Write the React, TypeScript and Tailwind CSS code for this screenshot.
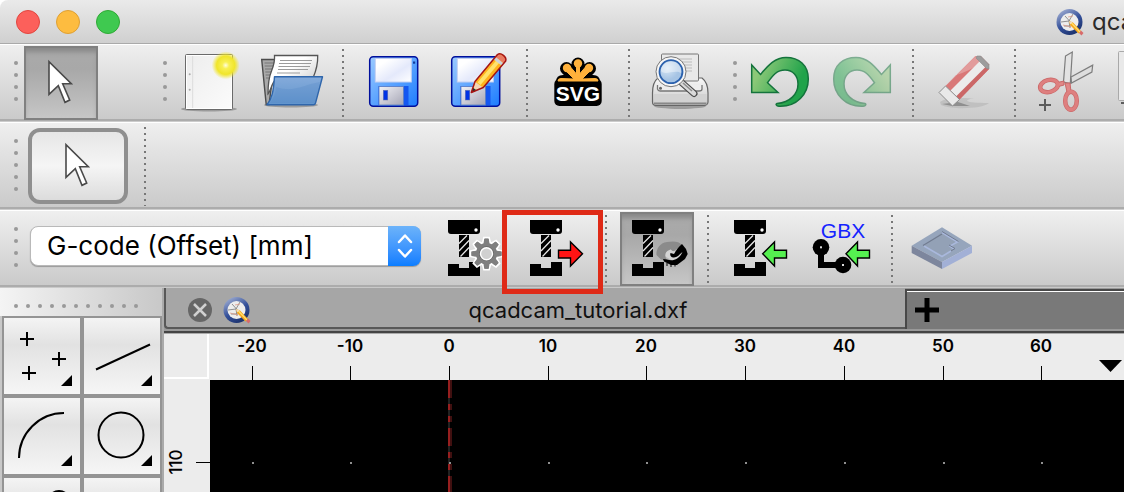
import type { ReactNode } from 'react'
import clsx from 'clsx'

const BAR = 'flex shrink-0 overflow-x-clip border-t border-t-white bg-linear-to-b from-[#efefef] to-[#c9c9c9]'

/* ---------- icons ---------- */

function Icon({ children, className }: { children: ReactNode; className?: string }) {
  return (
    <svg viewBox="0 0 64 64" className={clsx('block size-16 shrink-0 overflow-visible', className)} aria-hidden="true">
      {children}
    </svg>
  )
}

function PointerIcon() {
  return (
    <Icon>
      <path d="M20 10.7V43.3L29.3 34.7 36 51.3 40.7 49 33.7 32.7H42.3Z" fill="#fff" stroke="#4a4a4a" strokeWidth="1.6" />
    </Icon>
  )
}

function NewIcon() {
  return (
    <Icon>
      <defs>
        <radialGradient id="sun">
          <stop offset="0" stopColor="#fffde0" />
          <stop offset=".25" stopColor="#f8f052" />
          <stop offset=".65" stopColor="#f0e52c" />
          <stop offset="1" stopColor="#f0e52c" stopOpacity="0" />
        </radialGradient>
        <linearGradient id="paper" x1="0" y1="0" x2="1" y2="1">
          <stop offset="0" stopColor="#ededed" />
          <stop offset="1" stopColor="#fbfbfb" />
        </linearGradient>
      </defs>
      <ellipse cx="31" cy="58" rx="28" ry="2.5" fill="#000" opacity=".25" />
      <rect x="7.5" y="3.5" width="47" height="55" rx="1" fill="url(#paper)" stroke="#6a6a6a" />
      <rect x="8.5" y="4.5" width="45" height="53" fill="none" stroke="#fff" />
      <path d="M14.7 5V57" stroke="#dcdcdc" />
      <circle cx="11.7" cy="23.3" r="1" fill="#aaa" />
      <circle cx="11.7" cy="38.7" r="1" fill="#aaa" />
      <circle cx="47.7" cy="14.3" r="14" fill="url(#sun)" />
    </Icon>
  )
}

function OpenIcon() {
  return (
    <Icon>
      <defs>
        <linearGradient id="folder" x1="0" y1="0" x2="0" y2="1">
          <stop offset="0" stopColor="#85abdb" />
          <stop offset="1" stopColor="#6094cc" />
        </linearGradient>
        <linearGradient id="sheet" x1="0" y1="0" x2="1" y2="1">
          <stop offset=".4" stopColor="#fff" />
          <stop offset="1" stopColor="#bdbdbd" />
        </linearGradient>
      </defs>
      <ellipse cx="31" cy="54" rx="27" ry="2.5" fill="#000" opacity=".25" />
      <path d="M1.7 8.5H15L9 53.5H6.2Z" fill="#a9a9a9" stroke="#4c4c4c" strokeWidth="1.4" />
      <path d="M4.5 12H14M4.7 15H14M5 18H13M5.3 21H12M5.6 24H11M6 27H11" stroke="#777" strokeWidth="1.2" />
      <path d="M14.5 4.5H57.7C58 13 56 20 53 27H17C11 32 11 40 8 43 8 34 9 26 11.5 20 13.5 15 15 11 14.5 4.5Z" fill="url(#sheet)" stroke="#555" strokeWidth="1.3" />
      <path d="M20 9.5H52M19 12.5H51M18.5 15.5H50M18 18.5H48M17 22H40" stroke="#9b9b9b" strokeWidth="1.2" />
      <path d="M14.5 25.7H62.5L55.5 52C55 53.5 54.5 53.7 53.5 53.7H7C12 48 13.5 40 14.5 25.7Z" fill="url(#folder)" stroke="#2f66ab" strokeWidth="1.4" strokeLinejoin="round" />
      <path d="M16 36C34 42 42 34 60 31L54.5 52H10C14 47 15.5 42 16 36Z" fill="#4e85c4" opacity=".25" />
    </Icon>
  )
}

function Floppy() {
  return (
    <>
      <defs>
        <linearGradient id="disk" x1="0" y1="0" x2="1" y2="1">
          <stop offset="0" stopColor="#9ccbff" />
          <stop offset="1" stopColor="#1c7cff" />
        </linearGradient>
        <linearGradient id="label" x1="0" y1="0" x2="1" y2="1">
          <stop offset=".2" stopColor="#fff" />
          <stop offset=".6" stopColor="#e4e9fb" />
          <stop offset="1" stopColor="#fff" />
        </linearGradient>
        <linearGradient id="shutter" x1="0" y1="0" x2="1" y2="1">
          <stop offset="0" stopColor="#f2f2f6" />
          <stop offset="1" stopColor="#a5a5b5" />
        </linearGradient>
      </defs>
      <rect x="7.7" y="5.7" width="48" height="49.6" rx="3.5" fill="url(#disk)" stroke="#000f9c" strokeWidth="1.5" />
      <rect x="13.3" y="7.5" width="36" height="23.5" fill="url(#label)" stroke="#c3cff0" />
      <rect x="51" y="10.5" width="2.2" height="2.2" fill="#123c9c" />
      <rect x="16.5" y="35" width="30" height="19" fill="#1457f0" />
      <rect x="17" y="35.5" width="24.5" height="18.5" fill="url(#shutter)" stroke="#5d7fc4" strokeWidth=".8" />
      <rect x="21.3" y="39.3" width="4.5" height="9.7" fill="#0033e6" stroke="#6672a8" strokeWidth=".5" />
    </>
  )
}

function SaveAsIcon() {
  return (
    <Icon>
      <Floppy />
      <path d="M27.3 41.5 31 30.5 53.5 3.5C57 1 63 6 61.7 10L39.3 36.5Z" fill="#ffb31f" />
      <path d="M33.5 31.5 53 8.5 56 11 36.5 34Z" fill="#ffe36b" />
      <path d="M28 40.8 31.5 31 39 36.5Z" fill="#f2d5b4" />
      <path d="M27.3 41.5 29 36.8 32.5 39.3Z" fill="#153c2a" />
      <path d="M51.5 6 60 12.5 61.5 10C62.5 6.5 57.5 2.3 53.5 3.7Z" fill="#e97b62" />
      <path d="M50.5 7 59 13.8" stroke="#cdd3d9" strokeWidth="3" />
      <path d="M27.3 41.5 31 30.5 53.5 3.5C57 1 63 6 61.7 10L39.3 36.5Z" fill="none" stroke="#a51414" strokeWidth="1.5" strokeLinejoin="round" />
    </Icon>
  )
}

function SvgLogo() {
  return (
    <Icon>
      <path d="M32 29V13M32 29 20.5 17.5M32 29 43.5 17.5" stroke="#000" strokeWidth="13" strokeLinecap="round" />
      <path d="M10 31Q10 24 17 24H47Q54 24 54 31Z" />
      <rect x="8.3" y="28" width="47.4" height="27" rx="5" />
      <path d="M12 30Q12 27.5 15 27.5L28 28 20 20 24 15.5 30.5 23V12H33.5V23L40 15.5 44 20 36 28 49 27.5Q52 27.5 52 30Z" fill="#ffb13b" stroke="#ffb13b" />
      <circle cx="32" cy="12.5" r="4.2" fill="#ffb13b" />
      <circle cx="21" cy="17" r="4.2" fill="#ffb13b" />
      <circle cx="43" cy="17" r="4.2" fill="#ffb13b" />
      <text x="32" y="50" textAnchor="middle" fill="#fff" fontFamily="Liberation Sans, sans-serif" fontWeight="700" fontSize="21">SVG</text>
    </Icon>
  )
}

function PreviewIcon() {
  return (
    <Icon>
      <defs>
        <linearGradient id="printer" x1="0" y1="0" x2="0" y2="1">
          <stop offset="0" stopColor="#f8f8f8" />
          <stop offset="1" stopColor="#c8c8c8" />
        </linearGradient>
        <radialGradient id="lens" cx=".35" cy=".35">
          <stop offset="0" stopColor="#d8e7f5" />
          <stop offset="1" stopColor="#a6c4e4" />
        </radialGradient>
      </defs>
      <ellipse cx="32" cy="55" rx="26" ry="3" fill="#000" opacity=".25" />
      <path d="M10 27H54C58 30 60 36 60 42V51C60 53 58 54.5 56 54.5H8C6 54.5 4.5 53 4.5 51V42C4.5 36 6 30 10 27Z" fill="url(#printer)" stroke="#666" strokeWidth="1.2" />
      <path d="M6 43H58.5V50Q58 51 56 51H8Q6 51 6 49Z" fill="#d2d2d2" />
      <path d="M6 52.5H58.5" stroke="#888" strokeWidth="2" />
      <path d="M9.5 34V38Q10 40 12 40H51Q54 40 54 38V34" fill="#eee" stroke="#777" strokeWidth="1.3" />
      <rect x="13.5" y="3" width="37" height="27" rx="1" fill="#e9e9e9" stroke="#777" />
      <path d="M18 8H44M18 11H44M18 14H44M18 17H44M18 20H44" stroke="#bbb" strokeWidth="1.2" />
      <circle cx="12.5" cy="37.3" r="1.5" fill="#666" />
      <path d="M33 31 46 42.5" stroke="#4b4b4b" strokeWidth="7" strokeLinecap="round" />
      <path d="M33 31 46 42.5" stroke="#dadada" strokeWidth="4.5" strokeLinecap="round" />
      <path d="M35 32 44 40" stroke="#8c8c8c" strokeWidth="1.5" />
      <circle cx="23" cy="20.7" r="15" fill="#f6f6f6" stroke="#777" />
      <circle cx="23" cy="20.7" r="11.5" fill="url(#lens)" stroke="#2b61ad" strokeWidth="1.8" />
      <path d="M13 20C17 25 27 18 33 22 34 13 28 10.5 23 10.5 17 10.5 13 15 13 20Z" fill="#fff" opacity=".4" />
    </Icon>
  )
}

function UndoIcon({ flip = false }: { flip?: boolean }) {
  return (
    <Icon className={flip ? '-scale-x-100 opacity-50' : undefined}>
      <defs>
        <linearGradient id="undo" x1="0" y1="0" x2="1" y2=".4">
          <stop offset=".2" stopColor="#8cc878" />
          <stop offset=".9" stopColor="#20a34a" />
        </linearGradient>
      </defs>
      <path
        d="M3.7 14V41.5H30L19.5 31.7C25 24 29 19 37 19 45 19 50 25 50 33 50 43 42 51.5 29 52.5 27.5 53 28 55 31 55.3 49 56 60.3 43 60.3 28 60.3 14 51 6.5 38 6.5 26 6.5 19 16 12.5 23.5Z"
        fill="url(#undo)"
        stroke="#14733c"
        strokeWidth="1.5"
      />
    </Icon>
  )
}

function EraserIcon() {
  return (
    <Icon>
      <path d="M8 51C18 45 34 48 42 47 32 49 30 52 57 52 50 58 20 59 9 54Z" fill="#bcbcbc" opacity=".8" />
      <path d="M10 53 20 55H38L26 51Z" fill="#8f8f8f" />
      <path d="M13.5 35 43.5 5H48.7L57 13.5V18L27.5 48.5Z" fill="#d97878" />
      <path d="M22 43 54 11 57 13.5V18L27.5 48.5Z" fill="#cb6767" />
      <path d="M13.5 35 43.5 5H47L52 10Q38 20 24 24Z" fill="#e29b9b" />
      <path d="M18.5 39.5 48 10 53.5 16 24 45.5Z" fill="#ececec" />
      <path d="M45 5H48.7L57 13.5V18L54.5 17.5 44 7Z" fill="#9c9c9c" stroke="#8b8b8b" strokeWidth=".6" />
      <path d="M7 41.5 13.5 35 27.5 48.5 20.5 55Z" fill="#e9e9e9" stroke="#8d8d8d" />
    </Icon>
  )
}

function CutIcon() {
  return (
    <Icon>
      <path d="M31.5 5 38.3 1 36.3 32.5 29.5 31Z" fill="#e3e3e3" stroke="#7d7d7d" strokeWidth="1.2" />
      <path d="M37 26 58.7 14.2 57.9 21 37.5 32Z" fill="#dedede" stroke="#7d7d7d" strokeWidth="1.2" />
      <ellipse cx="15" cy="35" rx="9" ry="6" transform="rotate(-14 15 35)" fill="none" stroke="#c96767" strokeWidth="4.5" />
      <ellipse cx="37" cy="49.7" rx="5.8" ry="9" fill="none" stroke="#c96767" strokeWidth="4.5" />
      <path d="M23.5 31.5 30 30V34L24.5 35.5ZM31 32H36L37 41H33Z" fill="#e08787" stroke="#c96767" />
      <ellipse cx="15" cy="35" rx="9" ry="6" transform="rotate(-14 15 35)" fill="none" stroke="#de7f7f" strokeWidth="3.2" />
      <ellipse cx="37" cy="49.7" rx="5.8" ry="9" fill="none" stroke="#de7f7f" strokeWidth="3.2" />
      <path d="M5 54H17M11 48V60" stroke="#5c5c5c" strokeWidth="2" />
    </Icon>
  )
}

function CopyIcon() {
  return (
    <Icon>
      <rect x="2.5" y=".5" width="38" height="49" rx="1" fill="#e9e9e9" stroke="#a9a9a9" />
      <path d="M5 52H17M11 46V58" stroke="#5c5c5c" strokeWidth="2" />
    </Icon>
  )
}

// Milling head, drill and vice shared by all CAM tools
function Mill() {
  return (
    <>
      <path d="M7 3H39V14Q39 17 36 17H10Q7 17 7 14Z" />
      <circle cx="35" cy="13" r="1.7" fill="#fff" />
      <rect x="18" y="18" width="10" height="22" />
      <path d="M18 26.5 26 18.5M18 34 28 23.5M19.5 39.5 28 30.5" stroke="#e6e6e6" strokeWidth="1.3" />
      <path d="M7 47H18V51H28V45H39V59H7Z" />
    </>
  )
}

const TEETH = [0, 45, 90, 135, 180, 225, 270, 315]

function MillSetupIcon() {
  return (
    <Icon>
      <Mill />
      <g transform="translate(45.5 36.7)">
        {TEETH.map(a => (
          <path key={a} d="M-4-10-2.5-16H2.5L4-10Z" transform={`rotate(${a})`} fill="#7f7f7f" stroke="#fff" strokeWidth="1.8" />
        ))}
        <circle r="11.5" fill="#7f7f7f" stroke="#fff" strokeWidth="1.8" />
        {TEETH.map(a => (
          <path key={a} d="M-3.2-9-2.2-15H2.2L3.2-9Z" transform={`rotate(${a})`} fill="#7f7f7f" />
        ))}
        <circle r="7" fill="none" stroke="#555" strokeWidth=".6" />
        <circle r="6" fill="#d0d0d0" stroke="#fff" strokeWidth="1.4" />
      </g>
    </Icon>
  )
}

function MillExportIcon() {
  return (
    <Icon>
      <Mill />
      <path d="M35.5 33.3H47.5V25L59.5 36.8 47.5 49V41H35.5Z" fill="#ff1414" stroke="#000" strokeWidth="1.4" />
    </Icon>
  )
}

function MillPreviewIcon() {
  return (
    <Icon>
      <Mill />
      <path d="M39.5 39C40 35 43 32 47 32L52 36 58 34 56 41 48 44Z" fill="#d4d4d4" />
      <path d="M31.500 38C31 33 34 26 42 25 48 24 54 24 57 28L53 32C51 31 50 35 47.500 34 46 33 46 32 44.500 33 40 34 39 39 42 43L36 42.500Z" fill="#8b8b8b" />
      <path d="M57 27 61 32 62.700 37 60 42 56 45 52 48H46L39 44.500 38 42 42 42.500C49 45 55 41 57.500 35 54.500 37 53.500 40 49 40.500 46 41 44.500 38 45.500 36L49 37C51 34 53 30 57 27Z" />
      <path d="M42 46V49M46 47V50M50 47V49.500" stroke="#000" />
    </Icon>
  )
}

function MillImportIcon() {
  return (
    <Icon>
      <Mill />
      <path d="M59.5 33.3H47.5V25L35.7 36.8 47.5 49V41H59.5Z" fill="#55f050" stroke="#000" strokeWidth="1.4" />
    </Icon>
  )
}

function GerberIcon() {
  return (
    <Icon>
      <text x="34" y="21" textAnchor="middle" fill="#1423ff" fontFamily="Liberation Sans, sans-serif" fontSize="21">GBX</text>
      <path d="M12 30V48H34" fill="none" stroke="#000" strokeWidth="6" />
      <circle cx="12" cy="30.3" r="8.3" />
      <circle cx="34" cy="48" r="8.3" />
      <rect x="11" y="29.3" width="2" height="2" fill="#ddd" />
      <rect x="33" y="47" width="2" height="2" fill="#ddd" />
      <path d="M60.5 33.3H48.5V25L37 36.8 48.5 49V41H60.5Z" fill="#55f050" stroke="#000" strokeWidth="1.4" />
    </Icon>
  )
}

function BlockIcon() {
  return (
    <Icon>
      <path d="M31 10.3 61 28.7 31 45 .7 28.7Z" fill="#96a5bc" />
      <path d="M.7 28.7 31 45V52L.7 36Z" fill="#7d869d" />
      <path d="M61 28.7 31 45V52L61 36Z" fill="#a2b0d6" />
      <path d="M31 15 46.5 24.5 39 28.5 43 32 31 39 13 29Z" fill="#93a1b6" />
      <path d="M13 29 31 39.5 40 34" fill="none" stroke="#a9b8dc" strokeWidth="1.6" />
      <path d="M12 28.5 31 17" fill="none" stroke="#717b90" strokeWidth="1.2" />
      <path d="M31 15.5 46.5 25 39 29 43 32" fill="none" stroke="#a9b8dc" strokeWidth="1.6" />
      <path d="M31 14.5 47.5 24.5M38 28 44 31.5 40 34" fill="none" stroke="#717b90" />
    </Icon>
  )
}

function QcadIcon() {
  return (
    <svg viewBox="0 0 28 28" className="block size-7 shrink-0" aria-hidden="true">
      <defs>
        <linearGradient id="ring" x1="0" y1="0" x2=".6" y2="1">
          <stop offset="0" stopColor="#b4bfdc" />
          <stop offset=".6" stopColor="#34509a" />
          <stop offset="1" stopColor="#1c336f" />
        </linearGradient>
      </defs>
      <circle cx="13.5" cy="14" r="13" fill="url(#ring)" />
      <circle cx="13.5" cy="14" r="9" fill="#ededed" />
      <path d="M5 14 13 13 17 6M13 13 14 20M9 8 18 18M8 18H15" stroke="#777" strokeWidth=".8" fill="none" />
      <path d="M7 17 15 19M12 9 17 8" stroke="#d98" strokeWidth=".8" />
      <path d="M13 13 17 14.5 25 23 22.5 25.5 14 17Z" fill="#f7a71c" />
      <path d="M14.5 14 24 24" stroke="#ffe070" strokeWidth="1.2" />
      <path d="M13 13 16.5 14 14.3 16.5Z" fill="#f0ddc0" />
      <path d="M23 25 25 22.5 27.5 25 25.5 27.5Z" fill="#d86b6b" />
    </svg>
  )
}

/* ---------- toolbar parts ---------- */

function Handle({ dots }: { dots: number }) {
  return (
    <div className="flex w-6 shrink-0 flex-col gap-2 pt-4 pl-[14px]">
      {Array.from({ length: dots }, (_, i) => (
        <span key={i} className="size-1 rounded-full bg-[#999]" />
      ))}
    </div>
  )
}

function Separator() {
  return (
    <div className="my-1 w-3 shrink-0 px-[5px]">
      <div className="h-full bg-[repeating-linear-gradient(to_bottom,#777_0_2px,transparent_2px_6px)]" />
    </div>
  )
}

function ToolButton({ label, pressed = false, children }: { label: string; pressed?: boolean; children: ReactNode }) {
  return (
    <button
      type="button"
      aria-label={label}
      aria-pressed={pressed}
      className={clsx(
        'relative mt-px flex size-[74px] shrink-0 items-center justify-center border-2',
        pressed
          ? 'border-[#808080] bg-linear-to-b from-[#aaa] via-[#a8a8a8] via-30% to-[#c6c6c6] shadow-[inset_0_6px_5px_-2px_#888]'
          : 'border-transparent',
      )}
    >
      {children}
    </button>
  )
}

function DrawButton({ label, children }: { label: string; children: ReactNode }) {
  return (
    <button
      type="button"
      aria-label={label}
      className="size-20 border-2 border-[#949494] bg-linear-to-b from-[#f4f4f4] via-[#e2e2e2] via-35% to-[#f6f6f6]"
    >
      <svg viewBox="0 0 76 76" className="block size-[76px]" fill="none" stroke="#000" strokeWidth="2" aria-hidden="true">
        {children}
        <path d="M68 57V68H57Z" fill="#000" stroke="none" />
      </svg>
    </button>
  )
}

/* ---------- drawing area ---------- */

const TICKS = [
  { x: 42, label: '-20' },
  { x: 140, label: '-10' },
  { x: 239, label: '0' },
  { x: 338, label: '10' },
  { x: 436, label: '20' },
  { x: 535, label: '30' },
  { x: 634, label: '40' },
  { x: 733, label: '50' },
  { x: 831, label: '60' },
]

function TopRuler() {
  return (
    <svg className="block h-[46px] min-w-0 flex-1" fontFamily="Inter, sans-serif" fontSize="17" fontWeight="600">
      {TICKS.map(t => (
        <g key={t.label}>
          <text x={t.x} y="18" textAnchor="middle">{t.label}</text>
          <rect x={t.x} y="32" width="1" height="14" />
        </g>
      ))}
      <path d="M889 26H912L900.5 38Z" />
    </svg>
  )
}

function SideRuler() {
  return (
    <svg className="block w-[46px] shrink-0" fontFamily="Inter, sans-serif" fontSize="17" fontWeight="500">
      <text transform="translate(18 82) rotate(-90)" textAnchor="middle">110</text>
      <rect x="32" y="82" width="14" height="1" />
    </svg>
  )
}

function Canvas() {
  return (
    <svg className="block min-w-0 flex-1 bg-black">
      <rect x="238" width="2" height="100%" fill="#222" />
      <path d="M239 0V2000" stroke="#971f1f" strokeWidth="2" strokeDasharray="18 6 6 6 6 6" />
      <path d="M241 0V2000" stroke="#401010" strokeWidth="2" strokeDasharray="18 6 6 6 6 6" />
      {TICKS.map(t => (
        <rect key={t.label} x={t.x} y="82" width="2" height="2" fill="#8f8f8f" />
      ))}
    </svg>
  )
}

export default function App() {
  return (
    <div className="flex h-screen flex-col overflow-hidden bg-white font-[Inter,sans-serif] text-black">
      <header className="flex h-11 shrink-0 items-center overflow-hidden rounded-tl-lg border-b border-[#aaa] bg-linear-to-b from-[#eaeaea] to-[#d0d0d0] pl-4">
        <div className="flex gap-4">
          <button type="button" aria-label="Close" className="size-6 rounded-full border border-[#e2463f] bg-[#fc605b]" />
          <button type="button" aria-label="Minimize" className="size-6 rounded-full border border-[#dfa033] bg-[#fdbc40]" />
          <button type="button" aria-label="Zoom" className="size-6 rounded-full border border-[#2faa35] bg-[#3fc950]" />
        </div>
        <div className="ml-auto flex items-center gap-2">
          <QcadIcon />
          <h1 className="w-8 text-2xl whitespace-nowrap text-[#2b2b2b]">qca</h1>
        </div>
      </header>

      <div className={clsx(BAR, 'h-[78px]')}>
        <div className="flex w-[149px] shrink-0">
          <Handle dots={4} />
          <ToolButton label="Select" pressed><PointerIcon /></ToolButton>
        </div>
        <div className="flex w-[570px] shrink-0">
          <Handle dots={4} />
          <div className="flex gap-2">
            <ToolButton label="New"><NewIcon /></ToolButton>
            <ToolButton label="Open"><OpenIcon /></ToolButton>
            <Separator />
            <ToolButton label="Save"><Icon><Floppy /></Icon></ToolButton>
            <ToolButton label="Save as"><SaveAsIcon /></ToolButton>
            <Separator />
            <ToolButton label="SVG export"><SvgLogo /></ToolButton>
            <Separator />
            <ToolButton label="Print preview"><PreviewIcon /></ToolButton>
          </div>
        </div>
        <Handle dots={4} />
        <div className="flex gap-2">
          <ToolButton label="Undo"><UndoIcon /></ToolButton>
          <ToolButton label="Redo"><UndoIcon flip /></ToolButton>
          <Separator />
          <ToolButton label="Delete"><EraserIcon /></ToolButton>
          <Separator />
          <ToolButton label="Cut"><CutIcon /></ToolButton>
          <ToolButton label="Copy"><CopyIcon /></ToolButton>
        </div>
      </div>

      <div className={clsx(BAR, 'h-[88px] shadow-[0_-1px_0_#ccc,0_-3px_0_#acacac]')}>
        <Handle dots={5} />
        <button
          type="button"
          aria-label="Reset to selection tool"
          className="mt-[5px] mr-[11px] ml-1 flex h-[76px] w-[100px] items-center justify-center rounded-xl border-4 border-[#8f8f8f] bg-linear-to-b from-[#e6e6e6] via-[#f5f5f5] to-[#dcdcdc]"
        >
          <PointerIcon />
        </button>
        <Separator />
      </div>

      <div className={clsx(BAR, 'relative z-10 h-[78px] shadow-[0_-1px_0_#ccc,0_-3px_0_#acacac]')}>
        <Handle dots={4} />
        <div className="relative mt-[15px] mr-[15px] ml-[6px] h-10 w-[391px] shrink-0">
          <select
            aria-label="Postprocessor"
            className="size-full appearance-none rounded-lg border border-[#b9b9b9] bg-white pl-4 text-[26px] leading-8 shadow-[0_1px_1px_#999]"
          >
            <option>G-code (Offset) [mm]</option>
          </select>
          <span className="pointer-events-none absolute inset-y-0 right-0 flex w-[33px] items-center justify-center rounded-r-lg bg-linear-to-b from-[#6cb3fa] to-[#087dff]">
            <svg viewBox="0 0 16 26" className="h-[26px] w-4" fill="none" stroke="#fff" strokeWidth="2.5" strokeLinecap="round" strokeLinejoin="round">
              <path d="M2 9 8 2.500 14 9M2 17 8 23.500 14 17" />
            </svg>
          </span>
        </div>
        <div className="flex gap-2">
          <ToolButton label="CAM configuration"><MillSetupIcon /></ToolButton>
          <ToolButton label="CAM export">
            <MillExportIcon />
            <span className="absolute -top-1 -right-[13px] -left-[18px] h-[84px] border-5 border-[#df2a17]" />
          </ToolButton>
          <Separator />
          <ToolButton label="Toolpath preview" pressed><MillPreviewIcon /></ToolButton>
          <Separator />
          <ToolButton label="CAM import"><MillImportIcon /></ToolButton>
          <ToolButton label="Gerber import"><GerberIcon /></ToolButton>
          <Separator />
          <ToolButton label="Simulation"><BlockIcon /></ToolButton>
        </div>
        {/* Groove between the toolbar and the panels below */}
        <span className="absolute inset-x-0 bottom-px -z-10 h-[2px] bg-[#acacac]" />
      </div>

      <main className="flex min-h-0 flex-1">
        <aside className="w-[164px] shrink-0 overflow-hidden border-r-2 border-[#aaa] bg-[#c8c8c8]">
          <div className="flex h-7 items-center gap-2 bg-linear-to-r from-[#f4f4f4] to-[#c8c8c8] pt-2 pl-[14px]">
            {Array.from({ length: 11 }, (_, i) => (
              <span key={i} className="size-1 rounded-full bg-[#999]" />
            ))}
          </div>
          <div className="grid grid-cols-[80px_80px] pl-[2px]">
            <DrawButton label="Point">
              <path d="M16 21H30M23 14V28M48 41H62M55 34V48M18 55H32M25 48V62" />
            </DrawButton>
            <DrawButton label="Line"><path d="M12 51.5 66 26.5" /></DrawButton>
            <DrawButton label="Arc"><path d="M15 60A45 45 0 0 1 60 15" /></DrawButton>
            <DrawButton label="Circle"><circle cx="37" cy="37" r="22.5" /></DrawButton>
            <DrawButton label="Ellipse"><circle cx="55" cy="24" r="11" /></DrawButton>
            <DrawButton label="Spline"><path d="M14 60C20 20 50 60 62 24" /></DrawButton>
          </div>
        </aside>

        <section className="flex min-w-0 flex-1 flex-col bg-[#ececec]">
          <div className="flex h-[46px] shrink-0 border-b border-b-[#aaa] bg-[#999]">
            <div className="flex min-w-0 flex-1 border-b-2 border-[#444] pb-[2px]">
              <div className="flex min-w-0 flex-1 items-center rounded-bl-sm border-b-2 border-l-2 border-[#585858] bg-[#a6a6a6] pt-1 pl-[22px]">
                <button type="button" aria-label="Close tab" className="mr-[11px] flex size-6 items-center justify-center rounded-full bg-[#666]">
                  <svg viewBox="0 0 14 14" className="size-[14px]" stroke="#d0d0d0" strokeWidth="2.5">
                    <path d="M1 1 13 13M13 1 1 13" />
                  </svg>
                </button>
                <QcadIcon />
                <span className="flex-1 text-center text-[22px] leading-7 text-[#111]">qcadcam_tutorial.dxf</span>
              </div>
              <div className="mt-px w-[219px] border-t-2 border-l-2 border-[#484848] bg-[#797979] shadow-[inset_0_1px_0_#fff]">
                <button type="button" aria-label="New tab" className="ml-2 flex h-[38px] w-6 items-center justify-center">
                  <svg viewBox="0 0 24 24" className="size-6" stroke="#000" strokeWidth="5">
                    <path d="M0 12H24M12 0V24" />
                  </svg>
                </button>
              </div>
            </div>
          </div>
          <div className="flex shrink-0">
            <div className="mr-px mb-px h-[45px] w-[45px] shrink-0 border-r-2 border-b-2 border-white" />
            <TopRuler />
          </div>
          <div className="flex min-h-0 flex-1">
            <SideRuler />
            <Canvas />
          </div>
        </section>
      </main>
    </div>
  )
}
